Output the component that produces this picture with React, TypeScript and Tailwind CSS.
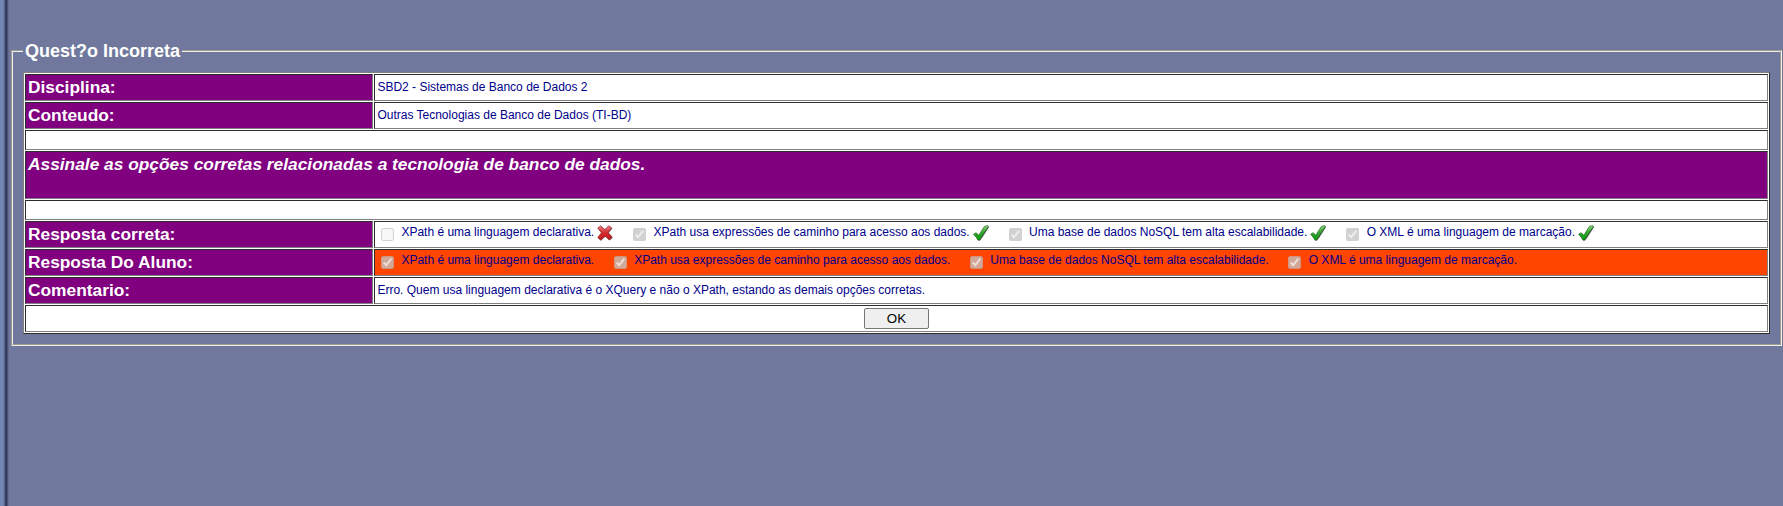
import type { ReactNode } from "react";

const options = [
  { text: "XPath é uma linguagem declarativa.", correct: false },
  { text: "XPath usa expressões de caminho para acesso aos dados.", correct: true },
  { text: "Uma base de dados NoSQL tem alta escalabilidade.", correct: true },
  { text: "O XML é uma linguagem de marcação.", correct: true },
];

const cell = "border border-t-[#2c2c2c] border-l-[#2c2c2c] border-r-[#808080] border-b-[#808080]";

function CheckIcon() {
  return (
    <svg width="16" height="16" viewBox="0 0 16 16" className="shrink-0">
      <defs>
        <linearGradient id="check" x1="0" y1="0" x2="0" y2="1">
          <stop offset="0" stopColor="#8fd880" />
          <stop offset="0.45" stopColor="#3aa634" />
          <stop offset="1" stopColor="#08a008" />
        </linearGradient>
      </defs>
      <path d="M1.2 10 3.6 8.4 6.3 10.8 12 2 15.2.9 16 2.2 9.4 12.6 7.2 15.6 5.4 15.8 3.2 12.4Z" fill="#2f3a2f" opacity=".8" />
      <path d="M.5 9.3 3 7.7 5.8 10.2 11.2 1.6 14.6.4 15.4 1.4 8.4 12 6.6 14.8 5 15 2.8 11.6Z" fill="url(#check)" stroke="#1a631a" strokeWidth=".6" />
    </svg>
  );
}

function CrossIcon() {
  return (
    <svg width="16" height="16" viewBox="0 0 16 16" className="shrink-0">
      <defs>
        <linearGradient id="cross" x1="0" y1="0" x2="0" y2="1">
          <stop offset="0" stopColor="#e88080" />
          <stop offset="0.5" stopColor="#d42a2e" />
          <stop offset="1" stopColor="#c4161c" />
        </linearGradient>
      </defs>
      <path d="M1.2 3.4 4 1.4 8.2 5 12.4 1.2 15.4 3.6 11.6 8 15.8 12.6 12.8 15.6 8.4 11.6 4 15.8 1 13 5 8.2Z" fill="#4a2020" opacity=".75" />
      <path d="M.7 3 3.6.8 7.8 4.4 11.9.8 14.7 3 11 7.5 15 12 12.2 14.8 8 11 3.6 15 .8 12.4 4.4 7.8Z" fill="url(#cross)" stroke="#8c1a1c" strokeWidth=".6" />
    </svg>
  );
}

function Label({ children }: { children: ReactNode }) {
  return (
    <div className={`${cell} flex w-[348px] shrink-0 items-start bg-[#800080] pt-[2px] pl-[2px] text-[17.33px] leading-[20px] font-bold text-white`}>
      {children}
    </div>
  );
}

function Row({ label, className = "bg-white", children }: { label: string; className?: string; children: ReactNode }) {
  return (
    <div className="flex h-[27px] gap-px">
      <Label>{label}</Label>
      <div className={`${cell} ${className} flex grow items-start pl-[2.4px] text-[12px] leading-[14px] text-[#00008b]`}>
        {children}
      </div>
    </div>
  );
}

function Option({ text, checked, icon, last }: { text: string; checked: boolean; icon?: ReactNode; last?: boolean }) {
  return (
    <div className={`flex h-full items-start whitespace-pre ${last ? "" : icon ? "mr-[16.33px]" : "mr-[16px]"}`}>
      <input type="checkbox" disabled checked={checked} readOnly className="mt-[6px] mr-[7px] ml-[3.6px] size-[13px]" />
      <span className="mt-[3px] ml-[0.4px]">{text}</span>
      {icon && <span className="mt-[3px] ml-[3px]">{icon}</span>}
    </div>
  );
}

export default function App() {
  return (
    <div className="flex h-[506px] overflow-hidden bg-[#70799d] font-['Liberation_Sans',Arial,sans-serif]">
      <div className="w-[9px] shrink-0 bg-[linear-gradient(to_right,#7389b6_0px,#7085b0_3px,#626f9c_4.3px,#383d5e_5.3px,#363b5c_6.7px,#4a5176_7.5px,#646c90_8.5px,#70799d_9px)]" />
      <fieldset className="mt-[41px] ml-[2px] h-[305px] w-[1771px] border-2 border-[#f0f0e8] px-[10px] [border-style:groove]">
        <legend className="px-[2px] text-[18px] leading-[20px] font-bold text-white">Quest?o Incorreta</legend>
        <div className="mt-[11px] flex h-[262px] w-[1747px] flex-col gap-px border border-t-[#808080] border-r-[#2c2c2c] border-b-[#2c2c2c] border-l-[#808080] bg-white p-px">
          <Row label="Disciplina:">
            <span className="mt-[5px]">SBD2 - Sistemas de Banco de Dados 2</span>
          </Row>
          <Row label="Conteudo:">
            <span className="mt-[5px]">Outras Tecnologias de Banco de Dados (TI-BD)</span>
          </Row>
          <div className={`${cell} h-[20px]`} />
          <div className={`${cell} h-[48px] bg-[#800080] pt-[2px] pl-[2px] text-[17.33px] leading-[20px] font-bold text-white italic`}>
            Assinale as opções corretas relacionadas a tecnologia de banco de dados.
          </div>
          <div className={`${cell} h-[20px]`} />
          <Row label="Resposta correta:">
            {options.map((o, i) => (
              <Option key={o.text} text={o.text} checked={o.correct} icon={o.correct ? <CheckIcon /> : <CrossIcon />} last={i === 3} />
            ))}
          </Row>
          <Row label="Resposta Do Aluno:" className="bg-[#ff4500]">
            {options.map((o, i) => (
              <Option key={o.text} text={o.text} checked last={i === 3} />
            ))}
          </Row>
          <Row label="Comentario:">
            <span className="mt-[5px]">
              Erro. Quem usa linguagem declarativa é o XQuery e não o XPath, estando as demais opções corretas.
            </span>
          </Row>
          <div className={`${cell} flex h-[27px] items-center justify-center`}>
            <button className="h-[21px] w-[65px] rounded-[2px] border border-[#767676] bg-[#efefef] text-[13.333px] leading-[15px] text-black">
              OK
            </button>
          </div>
        </div>
      </fieldset>
    </div>
  );
}
